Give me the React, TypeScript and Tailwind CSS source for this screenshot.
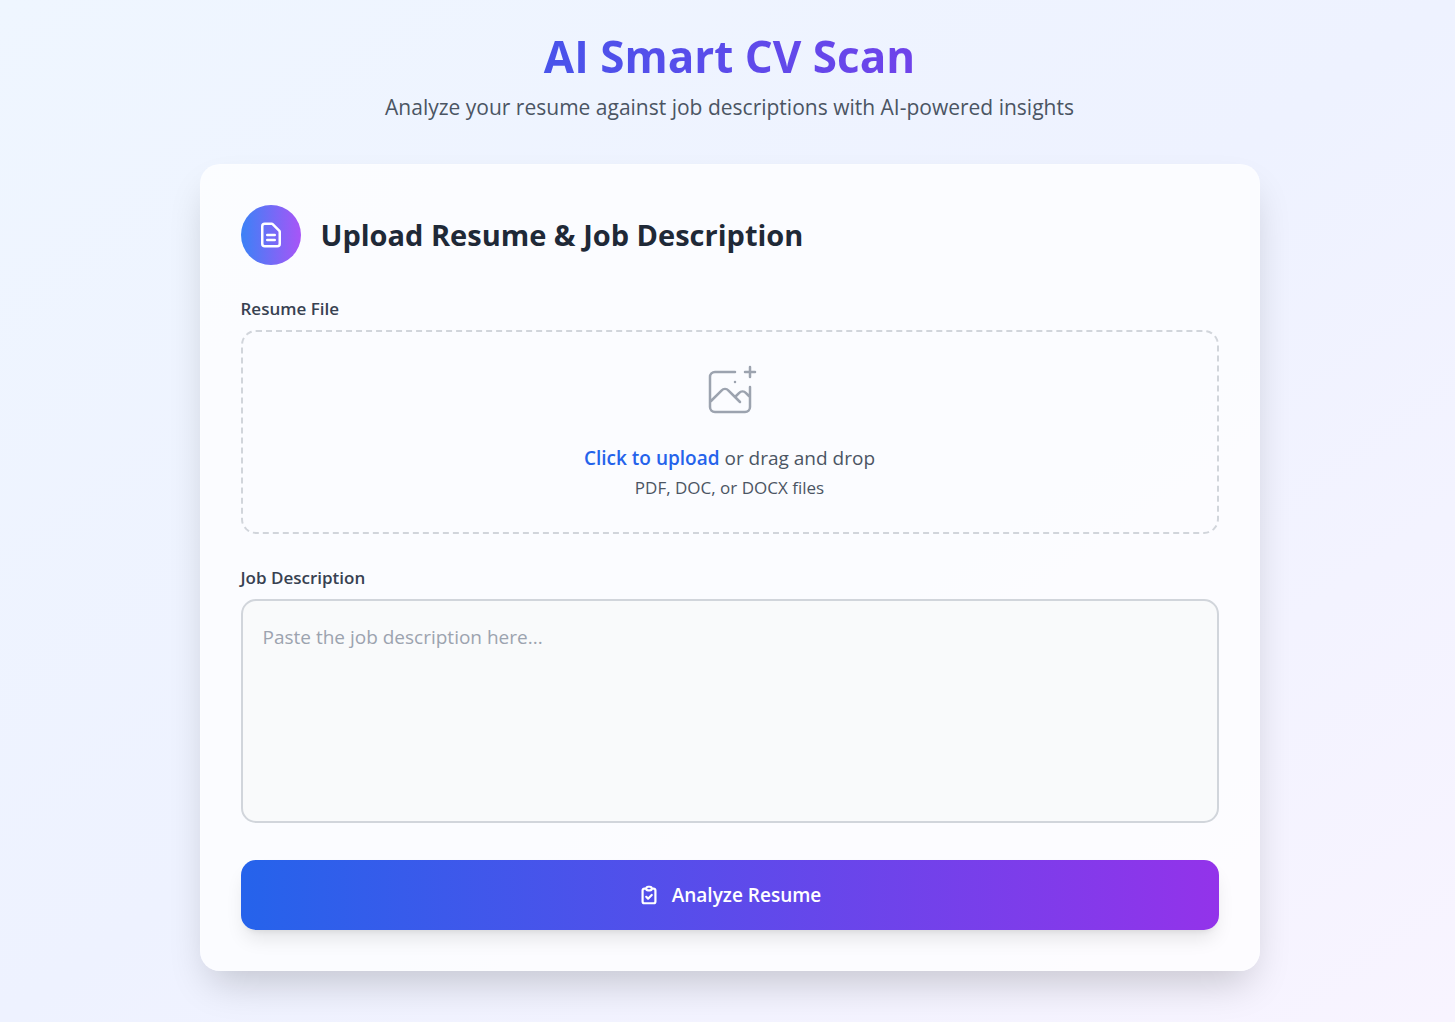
import { useState } from "react";

function DocumentIcon() {
  return (
    <svg className="size-[30px]" fill="none" stroke="currentColor" viewBox="0 0 24 24" aria-hidden="true">
      <path
        strokeLinecap="round"
        strokeLinejoin="round"
        strokeWidth={2}
        d="M9 12h6m-6 4h6m2 5H7a2 2 0 01-2-2V5a2 2 0 012-2h5.586a1 1 0 01.707.293l5.414 5.414a1 1 0 01.293.707V19a2 2 0 01-2 2z"
      />
    </svg>
  );
}

function AddImageIcon() {
  return (
    <svg className="size-[60px] text-[#9ca3af]" fill="none" stroke="currentColor" viewBox="0 0 48 48" aria-hidden="true">
      <path
        strokeLinecap="round"
        strokeLinejoin="round"
        strokeWidth={2}
        d="M28 8H12a4 4 0 00-4 4v20m32-12v8m0 0v8a4 4 0 01-4 4H12a4 4 0 01-4-4v-4m32-4l-3.172-3.172a4 4 0 00-5.656 0L28 28M8 32l9.172-9.172a4 4 0 015.656 0L28 28m0 0l4 4m4-24h8m-4-4v8m-12 4h.02"
      />
    </svg>
  );
}

function ClipboardCheckIcon() {
  return (
    <svg className="size-[22px]" fill="none" stroke="currentColor" viewBox="0 0 24 24" aria-hidden="true">
      <path
        strokeLinecap="round"
        strokeLinejoin="round"
        strokeWidth={2.4}
        d="M9 5H7a2 2 0 00-2 2v12a2 2 0 002 2h10a2 2 0 002-2V7a2 2 0 00-2-2h-2M9 5a2 2 0 002 2h2a2 2 0 002-2M9 5a2 2 0 012-2h2a2 2 0 012 2m-6 9l2 2 4-4"
      />
    </svg>
  );
}

export default function App() {
  const [fileName, setFileName] = useState("");

  return (
    <div className="min-h-screen bg-linear-to-br/srgb from-[#eff6ff] via-[#eef2ff] to-[#f8f4ff] py-[30px] pr-6 pl-7 font-['Segoe_UI','Open_Sans',sans-serif] text-[#1f2937]">
      <div className="mx-auto max-w-[1060px]">
        <header className="mb-10 text-center">
          <h1 className="mb-2 bg-linear-to-r/srgb from-[#2563eb] to-[#9333ea] bg-clip-text text-[44px] leading-[52px] font-bold text-transparent">
            AI Smart CV Scan
          </h1>
          <p className="text-[21px] leading-[34px] text-[#4b5563]">
            Analyze your resume against job descriptions with AI-powered insights
          </p>
        </header>

        <main className="rounded-[20px] border border-white/20 bg-white/75 p-10 shadow-[0_20px_40px_-10px_rgba(0,0,0,0.2)]">
          <div className="mb-[30px] flex items-center gap-5">
            <div className="flex size-[60px] shrink-0 items-center justify-center rounded-full bg-linear-to-r/srgb from-[#3b82f6] to-[#a855f7] text-white">
              <DocumentIcon />
            </div>
            <h2 className="text-[29px] leading-10 font-bold">Upload Resume &amp; Job Description</h2>
          </div>

          <form onSubmit={(event) => event.preventDefault()}>
            <label htmlFor="resume" className="mb-2 block text-[17px] leading-[27px] font-semibold text-[#374151]">
              Resume File
            </label>
            <label
              htmlFor="resume"
              className="mb-[30px] flex cursor-pointer flex-col items-center rounded-[15px] border-2 border-dashed border-[#d1d5db] p-[30px] text-[#4b5563]"
            >
              <AddImageIcon />
              <span className="mt-5 text-[19px] leading-8">
                <span className="font-semibold text-[#2563eb]">Click to upload</span> or drag and drop
              </span>
              <span className="text-[17px] leading-7">{fileName || "PDF, DOC, or DOCX files"}</span>
              <input
                id="resume"
                type="file"
                accept=".pdf,.doc,.docx"
                className="sr-only"
                onChange={(event) => setFileName(event.target.files?.[0]?.name ?? "")}
              />
            </label>

            <label htmlFor="job" className="mb-2 block text-[17px] leading-[27px] font-semibold text-[#374151]">
              Job Description
            </label>
            <textarea
              id="job"
              rows={6}
              placeholder="Paste the job description here..."
              className="mb-[37px] block h-56 w-full resize-none rounded-[15px] border-2 border-[#d1d5db] bg-[#f9fafb] px-5 py-5 text-[19px] leading-8 placeholder:text-[#9ca3af]"
            />

            <button
              type="submit"
              className="flex w-full items-center justify-center gap-3 rounded-[15px] bg-linear-to-r/srgb from-[#2563eb] to-[#9333ea] py-5 text-[19px] leading-[30px] font-semibold text-white shadow-[0_12px_19px_-4px_rgba(0,0,0,0.1),0_5px_7px_-5px_rgba(0,0,0,0.1)]"
            >
              <ClipboardCheckIcon />
              Analyze Resume
            </button>
          </form>
        </main>
      </div>
    </div>
  );
}
